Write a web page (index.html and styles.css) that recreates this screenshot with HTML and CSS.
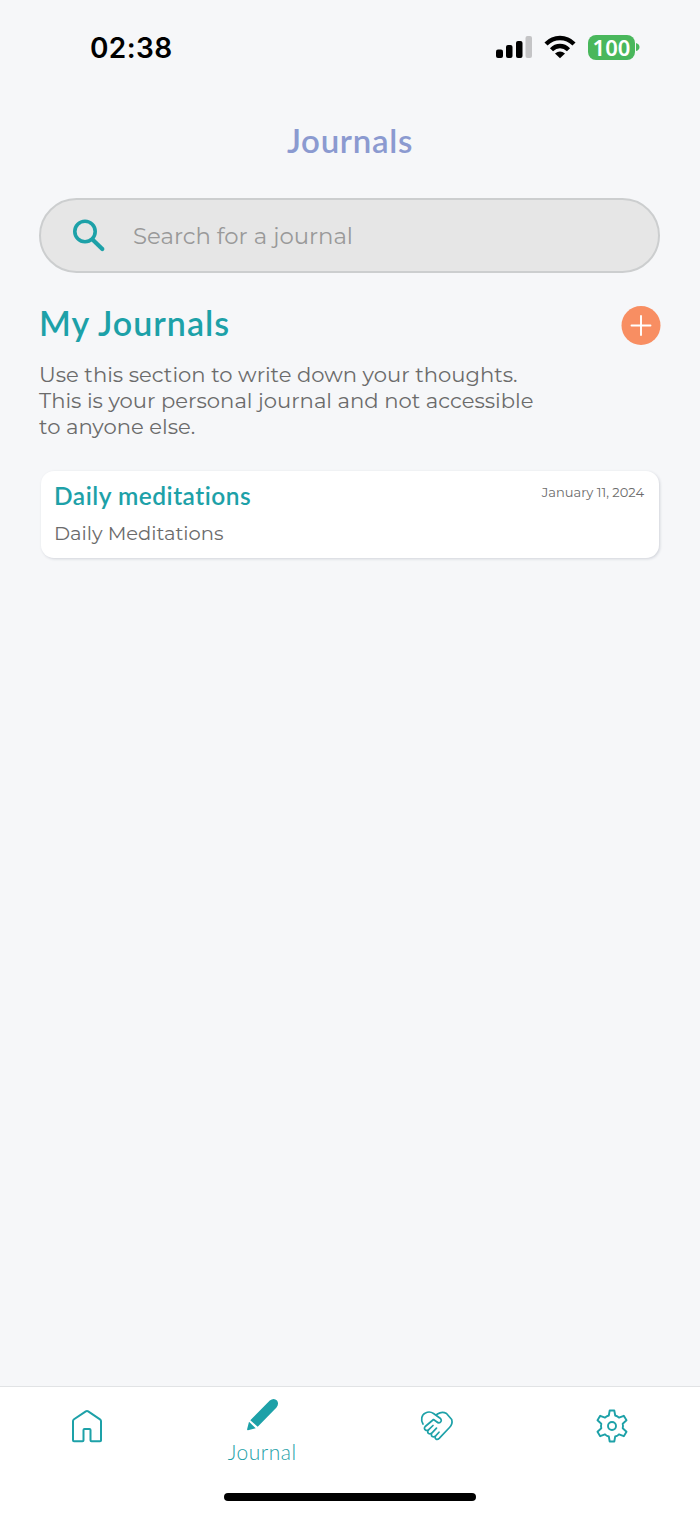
FILE: index.html
```html
<!DOCTYPE html>
<html lang="en">
<head>
<meta charset="utf-8">
<title>Journals</title>
<link rel="stylesheet" href="styles.css">
</head>
<body>
<div class="screen">
  <header class="status">
    <span class="time">02:38</span>
    <div class="indicators">
      <svg class="signal" width="36" height="22" viewBox="0 0 36 22"><rect x="0" y="13.500" width="7" height="8.500" rx="2"/><rect x="10" y="9" width="6.500" height="13" rx="2"/><rect x="20" y="5" width="6.500" height="17" rx="2"/><rect class="weak" x="29.500" y="0" width="6.500" height="22" rx="2"/></svg>
      <svg class="wifi" width="32" height="24" viewBox="0 0 32 24"><path d="M2 9C10 1 22 1 30 9M7.500 14.700C12.500 9.800 19.500 9.800 24.500 14.700" fill="none" stroke="#000" stroke-width="4.400"/><path d="M11 18.600q5-4.200 10 0L16 23.200z"/></svg>
      <div class="battery"><span class="level">100</span></div>
      <svg class="tip" width="4" height="8" viewBox="0 0 4 8"><path d="M0 0q3.500 1 3.500 4T0 8z" fill="#49b75c"/></svg>
    </div>
  </header>
  <h1 class="title">Journals</h1>
  <main class="content">
    <div class="search">
      <svg width="34" height="34" viewBox="0 0 34 34" fill="none" stroke="#1da1a8"><circle cx="13" cy="12.500" r="10.200" stroke-width="3.600"/><path d="M20.500 20.500L30.300 30" stroke-width="4.200" stroke-linecap="round"/></svg>
      <span class="placeholder">Search for a journal</span>
    </div>
    <div class="section-head">
      <h2 class="section-title">My Journals</h2>
      <svg width="40" height="40" viewBox="0 0 40 40"><circle cx="20" cy="20.500" r="19.500" fill="#f88e62"/><path d="M10.500 20.500h19M20 11v19" stroke="#fff" stroke-width="1.900" stroke-linecap="round"/></svg>
    </div>
    <p class="intro">Use this section to write down your thoughts.<br>This is your personal journal and not accessible<br>to anyone else.</p>
    <article class="card">
      <div class="card-head">
        <h3 class="card-title">Daily meditations</h3>
        <time class="date">January 11, 2024</time>
      </div>
      <p class="card-text">Daily Meditations</p>
    </article>
  </main>
  <footer class="dock">
    <nav class="tabs">
      <div class="tab"><svg width="32" height="34" viewBox="0 0 32 34" fill="none" stroke="#1da1a8" stroke-width="2" stroke-linejoin="round"><path d="M2 12Q2 11 3 10.300L14.800 2.300Q16 1.500 17.200 2.300L29 10.300Q30 11 30 12V31.500Q30 32.300 29 32.300H20.500Q19.500 32.300 19.500 31.300V21Q19.500 20 18.500 20H13.500Q12.500 20 12.500 21V31.300Q12.500 32.300 11.500 32.300H3Q2 32.300 2 31.300z"/></svg></div>
      <div class="tab active"><svg width="34" height="34" viewBox="0 0 34 34" fill="#1da1a8"><path d="M5.300 22.300L24.800 2.500Q28.800-.6 32 2.500Q34.300 5.500 31.500 9.500L12.700 28.700zM4 23.700L10.700 30.200L3 32.200Q1.900 32.300 2.100 31.200z"/></svg><span class="tab-label">Journal</span></div>
      <div class="tab"><svg width="34" height="32" viewBox="0 0 34 32" fill="none" stroke="#1da1a8" stroke-width="1.700" stroke-linecap="round" stroke-linejoin="round"><path d="M3 15C.5 11 1.500 5.500 5.500 4Q9.500 1.800 13.500 4.500L20.500 9.500Q22.300 12 20 13.500Q18.500 14.500 16.300 12.500L13.500 10.500L5.200 17.500Q3.500 19.500 5.500 21Q7 22 9 20.300L13 16.500M9 20.300Q6.500 23 8.700 24.500Q10.500 25.500 12.500 23.300L16.500 19.200M12.500 23.300Q10.300 26 12.300 27.500Q14 28.500 16 26.500L19 23.200M16 26.500Q14.300 28.700 16 30Q17.500 31 19.200 29.300L29.500 18.500Q33 15 31.700 10.500L26.500 4.500Q22 1.800 17.500 5L16.500 5.700"/></svg></div>
      <div class="tab"><svg width="34" height="34" viewBox="0 0 34 34" fill="none" stroke="#1da1a8" stroke-width="1.900" stroke-linejoin="round"><path d="M14.700 1.500H19.300L20.200 6.500Q22.500 7.200 24 8.700L28.800 6.800L31.500 11.300L27.700 14.700Q28.300 17 27.700 19.300L31.500 22.700L28.800 27.200L24 25.300Q22.500 26.800 20.200 27.500L19.300 32.500H14.700L13.800 27.500Q11.500 26.800 10 25.300L5.200 27.200L2.500 22.700L6.300 19.300Q5.700 17 6.300 14.700L2.500 11.300L5.200 6.800L10 8.700Q11.500 7.200 13.800 6.500z"/><circle cx="17" cy="17" r="4"/></svg></div>
    </nav>
    <div class="home-bar"></div>
  </footer>
</div>
</body>
</html>
```
FILE: styles.css
```css
* { box-sizing: border-box; }
body { margin: 0; background: #f6f7f9; font-family: Montserrat, Inter, sans-serif; }
h1, h2, h3, p { margin: 0; }
svg { display: block; flex: none; overflow: visible; }
span, time, h1, h2, h3 { white-space: nowrap; font-variant-ligatures: none; }
.screen { width: 700px; height: 1515px; display: flex; flex-direction: column; }
.status { height: 94px; padding: 1px 61px 0 90px; display: flex; align-items: center; justify-content: space-between; }
.time { font: 600 28px/34px Inter, sans-serif; letter-spacing: 0.4px; }
.indicators { display: flex; align-items: center; padding-bottom: 1px; }
.wifi { margin-left: 12px; }
.weak { fill: #c4c4c6; }
.battery { width: 47px; height: 25px; margin-left: 12px; border-radius: 8px; background: #49b75c; color: #fff; display: flex; align-items: center; justify-content: center; }
.level { font: 600 22px/25px "Noto Sans", sans-serif; }
.tip { margin: 0 -1px 0 1px; }
.title { height: 104px; padding-top: 26px; text-align: center; color: #8b9ad0; font: 600 33px/40px Lato, sans-serif; letter-spacing: 0.7px; }
.content { flex: 1; padding: 0 40px; }
.search { height: 75px; margin: 0 0 0 -1px; padding-left: 31px; border: 2px solid #cccecf; border-radius: 38px; background: #e6e6e6; display: flex; align-items: center; gap: 27px; }
.placeholder { color: #999; font-size: 22.800px; font-weight: 400; line-height: 30px; }
.section-head { height: 88px; padding: 32px 0 16px; margin: 0 -1px 0 -1px; display: flex; align-items: center; justify-content: space-between; }
.section-title { margin-top: -5px; color: #1da1a8; font: 600 34px/40px Lato, sans-serif; letter-spacing: 1px; }
.intro { margin-left: -1px; padding-top: 1px; color: #6b6b6b; font-size: 21.130px; font-weight: 400; line-height: 26px; }
.card { height: 87px; margin: 31px 1px 0; padding: 10px 15px 0 13px; border-radius: 13px; background: #fff; box-shadow: 1px 1px 3px rgba(40, 50, 80, .18); }
.card-head { display: flex; justify-content: space-between; }
.card-title { color: #1da1a8; font: 600 24.500px/30px Lato, sans-serif; letter-spacing: 0.5px; }
.date { color: #6b6b6b; font-size: 13px; line-height: 22px; }
.card-text { margin-top: 9px; color: #6b6b6b; font-size: 19.500px; font-weight: 400; line-height: 26px; }
.dock { height: 129px; border-top: 1px solid #e1e3e5; background: #fff; display: flex; flex-direction: column; align-items: center; }
.tabs { width: 100%; height: 106px; padding-right: 1px; display: grid; grid-template-columns: repeat(4, 1fr); }
.tab { display: flex; flex-direction: column; align-items: center; padding-top: 22px; }
.active { padding-top: 11px; }
.tab-label { margin-top: 5px; color: #1da1a8; font: 300 21px/30px Lato, sans-serif; letter-spacing: 0.5px; }
.home-bar { width: 252px; height: 8px; border-radius: 4px; background: #000; }
```
